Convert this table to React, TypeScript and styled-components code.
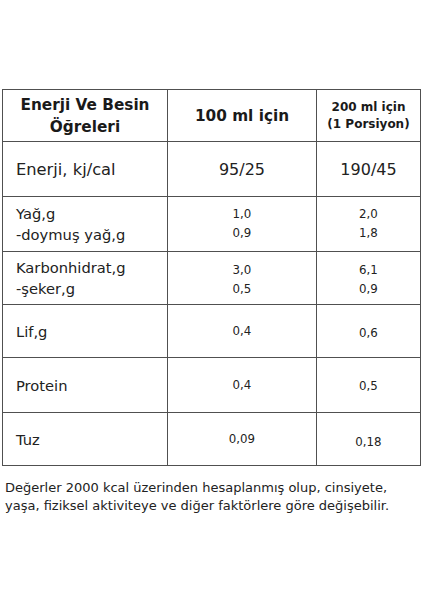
import React from "react";
import styled, { createGlobalStyle } from "styled-components";

const GlobalStyle = createGlobalStyle`
  html, body {
    margin: 0;
    padding: 0;
    background: #ffffff;
  }
  body {
    font-family: "DejaVu Sans", "Noto Sans", sans-serif;
    color: #1f1f1f;
  }
`;

const Page = styled.div`
  width: 424px;
  height: 600px;
  padding: 89px 4px 0 2px;
  box-sizing: border-box;
`;

const Table = styled.table`
  width: 418px;
  border-collapse: collapse;
  table-layout: fixed;
`;

const Col = styled.col<{ $w: number }>`
  width: ${(p) => p.$w}px;
`;

const Row = styled.tr<{ $h: number }>`
  height: ${(p) => p.$h}px;
`;

const Cell = styled.td<{ $center?: boolean; $shift?: number }>`
  border: 1.5px solid #505050;
  padding: ${(p) => (p.$shift ? `${p.$shift}px` : "0")} 0 0
    ${(p) => (p.$center ? "0" : "13px")};
  text-align: ${(p) => (p.$center ? "center" : "left")};
  vertical-align: middle;
`;

const HeadText = styled.div<{ $size: number; $lh: number }>`
  font-weight: 700;
  font-size: ${(p) => p.$size}px;
  line-height: ${(p) => p.$lh}px;
  color: #1a1a1a;
`;

const Label = styled.div<{ $size: number }>`
  font-size: ${(p) => p.$size}px;
  line-height: 21px;
  color: #222;
`;

const Value = styled.div<{ $size: number }>`
  font-size: ${(p) => p.$size}px;
  line-height: 19px;
  color: #222;
`;

const Note = styled.p`
  margin: 13px 0 0 3px;
  font-size: 13px;
  line-height: 18px;
  color: #222;
  white-space: nowrap;
`;

const rows: {
  label: string[];
  a: string[];
  b: string[];
  h: number;
  big?: boolean;
  shiftA?: number;
  shiftB?: number;
}[] = [
  { label: ["Enerji, kj/cal"], a: ["95/25"], b: ["190/45"], h: 55, big: true },
  { label: ["Yağ,g", "-doymuş yağ,g"], a: ["1,0", "0,9"], b: ["2,0", "1,8"], h: 55 },
  { label: ["Karbonhidrat,g", "-şeker,g"], a: ["3,0", "0,5"], b: ["6,1", "0,9"], h: 53, shiftA: 3, shiftB: 3 },
  { label: ["Lif,g"], a: ["0,4"], b: ["0,6"], h: 53, shiftB: 4 },
  { label: ["Protein"], a: ["0,4"], b: ["0,5"], h: 55, shiftB: 3 },
  { label: ["Tuz"], a: ["0,09"], b: ["0,18"], h: 53, shiftB: 6 },
];

export default function App() {
  return (
    <Page>
      <GlobalStyle />
      <Table>
        <colgroup>
          <Col $w={165} />
          <Col $w={149} />
          <Col $w={104} />
        </colgroup>
        <tbody>
          <Row $h={52}>
            <Cell $center>
              <HeadText $size={15.3} $lh={22}>
                Enerji Ve Besin
              </HeadText>
              <HeadText $size={15.3} $lh={22}>
                Öğreleri
              </HeadText>
            </Cell>
            <Cell $center>
              <HeadText $size={15.3} $lh={22}>
                100 ml için
              </HeadText>
            </Cell>
            <Cell $center>
              <HeadText $size={12} $lh={17}>
                200 ml için
              </HeadText>
              <HeadText $size={12} $lh={17}>
                (1 Porsiyon)
              </HeadText>
            </Cell>
          </Row>
          {rows.map((r) => (
            <Row $h={r.h} key={r.label[0]}>
              <Cell>
                {r.label.map((t) => (
                  <Label $size={r.big ? 16.3 : 14.7} key={t}>
                    {t}
                  </Label>
                ))}
              </Cell>
              <Cell $center $shift={r.shiftA}>
                {r.a.map((t, i) => (
                  <Value $size={r.big ? 16 : 11.8} key={i}>
                    {t}
                  </Value>
                ))}
              </Cell>
              <Cell $center $shift={r.shiftB}>
                {r.b.map((t, i) => (
                  <Value $size={r.big ? 16 : 11.8} key={i}>
                    {t}
                  </Value>
                ))}
              </Cell>
            </Row>
          ))}
        </tbody>
      </Table>
      <Note>
        Değerler 2000 kcal üzerinden hesaplanmış olup, cinsiyete,
        <br />
        yaşa, fiziksel aktiviteye ve diğer faktörlere göre değişebilir.
      </Note>
    </Page>
  );
}
